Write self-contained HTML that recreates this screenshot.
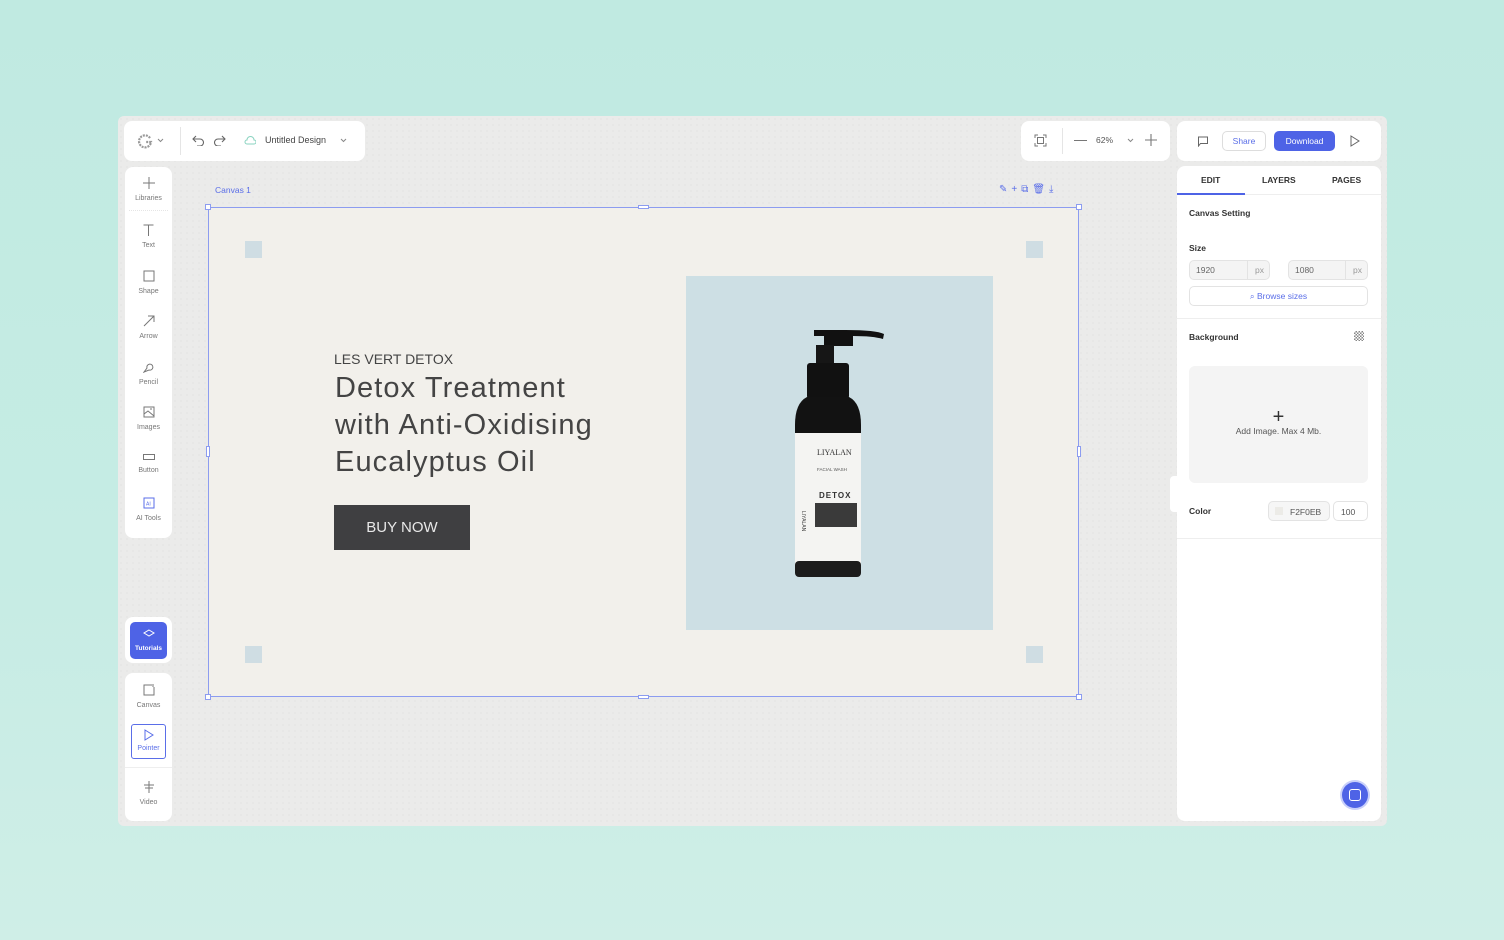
<!DOCTYPE html>
<html><head><meta charset="utf-8"><style>
*{box-sizing:border-box;margin:0;padding:0}
body{width:1504px;height:940px;overflow:hidden;background:linear-gradient(180deg,#c0eae1 0%,#c6ece4 60%,#cfeee7 100%);font-family:"Liberation Sans",sans-serif;position:relative;color:#333}
.abs{position:absolute}
.frame{left:118px;top:116px;width:1269px;height:710px;background:#ebebea;border-radius:6px;background-image:radial-gradient(#dcdcdc 0.6px,transparent 0.7px);background-size:6px 6px}
.card{background:#fff;border-radius:8px;position:absolute}
.tool{position:absolute;left:0;width:47px;text-align:center;font-size:7px;color:#777}
.tool svg{display:block;margin:0 auto 6px}
.btab{font-size:8.5px;font-weight:bold;color:#333;position:absolute;top:9px}
.lbl{font-size:8.5px;font-weight:bold;color:#333;position:absolute}
.inp{position:absolute;height:20px;border:1px solid #e3e3e3;border-radius:5px;background:#f4f4f4;font-size:8.5px;color:#666}
</style></head><body>
<div class="abs frame"></div>
<div class="card" style="left:124px;top:121px;width:241px;height:40px">
 <svg class="abs" style="left:13px;top:12px" width="16" height="16" viewBox="0 0 16 16"><path d="M13 5A6 6 0 1 0 14 9H9" fill="none" stroke="#999" stroke-width="2.2" stroke-dasharray="2 1"/></svg>
 <svg class="abs" style="left:33px;top:17px" width="7" height="5" viewBox="0 0 7 5"><path d="M1 1l2.5 2.5L6 1" fill="none" stroke="#888"/></svg>
 <div class="abs" style="left:56px;top:6px;width:1px;height:28px;background:#e5e5e5"></div>
 <svg class="abs" style="left:68px;top:13px" width="13" height="12" viewBox="0 0 13 12"><path d="M4 2L1 5l3 3M1 5h7a3.5 3.5 0 0 1 0 7H5" fill="none" stroke="#666" stroke-width="1.1"/></svg>
 <svg class="abs" style="left:89px;top:13px" width="13" height="12" viewBox="0 0 13 12"><path d="M9 2l3 3-3 3M12 5H5a3.5 3.5 0 0 0 0 7h3" fill="none" stroke="#666" stroke-width="1.1"/></svg>
 <svg class="abs" style="left:120px;top:15px" width="12" height="9" viewBox="0 0 12 9"><path d="M3 8h7a2 2 0 0 0 0-4 3.5 3.5 0 0 0-7 0 2 2 0 0 0 0 4z" fill="none" stroke="#8ad3c0"/></svg>
 <div class="abs" style="left:141px;top:14px;font-size:9px;color:#444">Untitled Design</div>
 <svg class="abs" style="left:216px;top:17px" width="7" height="5" viewBox="0 0 7 5"><path d="M1 1l2.5 2.5L6 1" fill="none" stroke="#888"/></svg>
</div>
<div class="card" style="left:1021px;top:121px;width:149px;height:40px">
 <svg class="abs" style="left:13px;top:13px" width="13" height="13" viewBox="0 0 13 13"><path d="M1 4V1h3M9 1h3v3M12 9v3H9M4 12H1V9" fill="none" stroke="#777"/><rect x="3.5" y="3.5" width="6" height="6" fill="none" stroke="#777"/></svg>
 <div class="abs" style="left:41px;top:7px;width:1px;height:26px;background:#e5e5e5"></div>
 <div class="abs" style="left:53px;top:19px;width:13px;height:1.2px;background:#777"></div>
 <div class="abs" style="left:75px;top:14px;font-size:8.5px;color:#555">62%</div>
 <svg class="abs" style="left:106px;top:17px" width="7" height="5" viewBox="0 0 7 5"><path d="M1 1l2.5 2.5L6 1" fill="none" stroke="#888"/></svg>
 <svg class="abs" style="left:124px;top:13px" width="12" height="12" viewBox="0 0 12 12"><path d="M6 0v12M0 6h12" stroke="#777" stroke-width="1.1"/></svg>
</div>
<div class="card" style="left:1177px;top:121px;width:204px;height:40px">
 <svg class="abs" style="left:20px;top:15px" width="12" height="11" viewBox="0 0 12 11"><path d="M1.5 1h9v6.5h-7L1.5 10z" fill="none" stroke="#666"/></svg>
 <div class="abs" style="left:45px;top:10px;width:44px;height:20px;border:1px solid #ddd;border-radius:5px;font-size:8.5px;color:#5a6ee8;text-align:center;line-height:18px">Share</div>
 <div class="abs" style="left:97px;top:10px;width:61px;height:20px;background:#4e63e6;border-radius:5px;font-size:8.5px;color:#fff;text-align:center;line-height:20px">Download</div>
 <svg class="abs" style="left:173px;top:14px" width="10" height="12" viewBox="0 0 10 12"><path d="M1 1l8 5-8 5z" fill="none" stroke="#666"/></svg>
</div>
<div class="card" style="left:125px;top:167px;width:47px;height:371px">
 <div class="tool" style="top:10px"><svg width="12" height="12" viewBox="0 0 12 12"><path d="M6 0v12M0 6h12" stroke="#777"/></svg>Libraries</div>
 <div style="position:absolute;left:4px;right:4px;top:43px;border-top:1px dotted #e5e5e5"></div>
 <div class="tool" style="top:57px"><svg width="11" height="12" viewBox="0 0 11 12"><path d="M0.5 1h10M5.5 1v11" stroke="#777"/></svg>Text</div>
 <div class="tool" style="top:103px"><svg width="12" height="12" viewBox="0 0 12 12"><rect x="1" y="1" width="10" height="10" fill="none" stroke="#777"/></svg>Shape</div>
 <div class="tool" style="top:148px"><svg width="12" height="12" viewBox="0 0 12 12"><path d="M1 11L11 1M5 1h6v6" fill="none" stroke="#777"/></svg>Arrow</div>
 <div class="tool" style="top:194px"><svg width="12" height="12" viewBox="0 0 12 12"><path d="M1 11l3-4a3 3 0 1 1 2 2z" fill="none" stroke="#777"/></svg>Pencil</div>
 <div class="tool" style="top:239px"><svg width="12" height="12" viewBox="0 0 12 12"><rect x="1" y="1" width="10" height="10" fill="none" stroke="#777"/><path d="M1 8l4-3 6 5M7 3h2" fill="none" stroke="#777"/></svg>Images</div>
 <div class="tool" style="top:286px"><svg width="12" height="8" viewBox="0 0 12 8"><rect x="0.5" y="1.5" width="11" height="5" fill="none" stroke="#777"/></svg>Button</div>
 <div class="tool" style="top:330px"><svg width="12" height="12" viewBox="0 0 12 12"><rect x="1" y="1" width="10" height="10" fill="none" stroke="#5a6ee8"/><text x="3" y="8.5" font-size="5" fill="#5a6ee8">AI</text></svg>AI Tools</div>
</div>
<div class="card" style="left:125px;top:617px;width:47px;height:46px">
 <div class="abs" style="left:5px;top:5px;width:37px;height:37px;background:#4e63e6;border-radius:5px;color:#fff;font-size:6.5px;font-weight:bold;text-align:center;padding-top:7px"><svg width="12" height="10" viewBox="0 0 12 10" style="display:block;margin:0 auto 6px"><path d="M6 1l5 3-5 3-5-3z" fill="none" stroke="#fff"/></svg>Tutorials</div>
</div>
<div class="card" style="left:125px;top:673px;width:47px;height:148px">
 <div class="tool" style="top:11px"><svg width="12" height="12" viewBox="0 0 12 12"><path d="M9 1H1v10h10V3M10 0v3" fill="none" stroke="#777"/></svg>Canvas</div>
 <div class="abs" style="left:6px;top:51px;width:35px;height:35px;border:1px solid #5a6ee8;border-radius:3px;color:#5a6ee8;font-size:7px;text-align:center;padding-top:4px"><svg width="11" height="12" viewBox="0 0 11 12" style="display:block;margin:0 auto 4px"><path d="M2 1l8 5-8 5z" fill="none" stroke="#5a6ee8"/></svg>Pointer</div>
 <div style="position:absolute;left:0;right:0;top:94px;border-top:1px solid #eee"></div>
 <div class="tool" style="top:108px"><svg width="12" height="12" viewBox="0 0 12 12"><path d="M6 0v12M1 4h10M2 7h8" stroke="#777"/></svg>Video</div>
</div>
<div class="abs" style="left:215px;top:185px;font-size:8.5px;color:#5a6ee8">Canvas 1</div>
<div class="abs" style="left:999px;top:184px;font-size:10px;color:#5a6ee8;letter-spacing:4px">✎+⧉🗑⤓</div>
<div class="abs" style="left:208px;top:207px;width:871px;height:490px;background:#f2f0eb;border:1px solid #8c9cf0"></div>
<div class="abs" style="left:205px;top:204px;width:6px;height:6px;background:#fff;border:1px solid #8c9cf0"></div>
<div class="abs" style="left:1076px;top:204px;width:6px;height:6px;background:#fff;border:1px solid #8c9cf0"></div>
<div class="abs" style="left:205px;top:694px;width:6px;height:6px;background:#fff;border:1px solid #8c9cf0"></div>
<div class="abs" style="left:1076px;top:694px;width:6px;height:6px;background:#fff;border:1px solid #8c9cf0"></div>
<div class="abs" style="left:638px;top:205px;width:11px;height:4px;background:#fff;border:1px solid #8c9cf0"></div>
<div class="abs" style="left:638px;top:695px;width:11px;height:4px;background:#fff;border:1px solid #8c9cf0"></div>
<div class="abs" style="left:206px;top:446px;width:4px;height:11px;background:#fff;border:1px solid #8c9cf0"></div>
<div class="abs" style="left:1077px;top:446px;width:4px;height:11px;background:#fff;border:1px solid #8c9cf0"></div>
<div class="abs" style="left:245px;top:241px;width:17px;height:17px;background:#cfdde3"></div>
<div class="abs" style="left:1026px;top:241px;width:17px;height:17px;background:#cfdde3"></div>
<div class="abs" style="left:245px;top:646px;width:17px;height:17px;background:#cfdde3"></div>
<div class="abs" style="left:1026px;top:646px;width:17px;height:17px;background:#cfdde3"></div>
<div class="abs" style="left:334px;top:351px;font-size:14px;color:#444">LES VERT DETOX</div>
<div class="abs" style="left:335px;top:370px;font-size:29px;line-height:37px;color:#444;letter-spacing:1.1px">Detox Treatment<br>with Anti-Oxidising<br>Eucalyptus Oil</div>
<div class="abs" style="left:334px;top:505px;width:136px;height:45px;background:#3f3f41;color:#e8e8e8;font-size:15px;text-align:center;line-height:45px">BUY NOW</div>
<div class="abs" style="left:686px;top:276px;width:307px;height:354px;background:#cddfe4"></div>
<svg class="abs" style="left:790px;top:325px" width="96" height="255" viewBox="0 0 96 255">
 <path d="M24 5h32q30 0 38 4l-1 5q-10-3-30-3v10H34V11h-10z" fill="#111"/>
 <rect x="26" y="20" width="18" height="18" fill="#161616"/>
 <rect x="17" y="38" width="42" height="36" rx="3" fill="#111"/>
 <path d="M17 72q-12 6-12 28v140q0 12 10 12h46q10 0 10-12V100q0-22-12-28z" fill="#121212"/>
 <rect x="5" y="108" width="66" height="135" fill="#f4f4f2"/>
 <text x="27" y="130" font-size="8" font-family="Liberation Serif" fill="#333">LIYALAN</text>
 <text x="27" y="146" font-size="4.5" fill="#555">FACIAL WASH</text>
 <text x="29" y="173" font-size="8" font-weight="bold" fill="#333" letter-spacing="1">DETOX</text>
 <rect x="25" y="178" width="42" height="24" fill="#3a3a3a"/>
 <text x="8" y="190" font-size="5" fill="#444" transform="rotate(90 12 190)">LIYALAN</text>
 <rect x="5" y="236" width="66" height="16" rx="4" fill="#1c1c1c"/>
</svg>
<div class="card" style="left:1177px;top:166px;width:204px;height:655px">
 <div class="btab" style="left:24px">EDIT</div>
 <div class="btab" style="left:85px">LAYERS</div>
 <div class="btab" style="left:155px">PAGES</div>
 <div class="abs" style="left:0;top:27px;width:68px;height:2px;background:#4e63e6"></div>
 <div class="abs" style="left:68px;top:28px;width:136px;height:1px;background:#eee"></div>
 <div class="lbl" style="left:12px;top:42px">Canvas Setting</div>
 <div class="lbl" style="left:12px;top:77px">Size</div>
 <div class="inp" style="left:12px;top:94px;width:81px"><span class="abs" style="left:6px;top:4px">1920</span><span class="abs" style="left:57px;top:0;height:18px;border-left:1px solid #e3e3e3;padding:4px 0 0 7px;color:#999">px</span></div>
 <div class="inp" style="left:111px;top:94px;width:80px"><span class="abs" style="left:6px;top:4px">1080</span><span class="abs" style="left:56px;top:0;height:18px;border-left:1px solid #e3e3e3;padding:4px 0 0 7px;color:#999">px</span></div>
 <div class="abs" style="left:12px;top:120px;width:179px;height:20px;border:1px solid #e3e3e3;border-radius:5px;font-size:8.5px;color:#5a6ee8;text-align:center;line-height:18px">⌕ Browse sizes</div>
 <div class="abs" style="left:0;top:152px;width:204px;height:1px;background:#eee"></div>
 <div class="lbl" style="left:12px;top:166px">Background</div>
 <div class="abs" style="left:177px;top:165px;width:10px;height:10px;background-image:repeating-conic-gradient(#888 0 25%,#fff 0 50%);background-size:3px 3px"></div>
 <div class="abs" style="left:12px;top:200px;width:179px;height:117px;background:#f4f4f4;border-radius:6px;text-align:center;font-size:8.5px;color:#555;padding-top:42px"><div style="font-size:20px;line-height:18px;color:#333;font-weight:300">+</div>Add Image. Max 4 Mb.</div>
 <div class="lbl" style="left:12px;top:340px">Color</div>
 <div class="abs" style="left:91px;top:335px;width:62px;height:20px;border:1px solid #e3e3e3;border-radius:5px;background:#f6f6f6;font-size:8.5px;color:#555"><span class="abs" style="left:6px;top:5px;width:8px;height:8px;background:#ecebe7"></span><span class="abs" style="left:21px;top:5px">F2F0EB</span></div>
 <div class="abs" style="left:156px;top:335px;width:35px;height:20px;border:1px solid #e3e3e3;border-radius:5px;font-size:8.5px;color:#555;padding:5px 0 0 7px">100</div>
 <div class="abs" style="left:0;top:372px;width:204px;height:1px;background:#eee"></div>
 <div class="abs" style="left:165px;top:616px;width:26px;height:26px;border-radius:50%;background:#4e63e6;box-shadow:0 0 0 2px #c9d0fa"><div class="abs" style="left:7px;top:7px;width:12px;height:12px;border:1.5px solid #fff;border-radius:3px"></div></div>
</div>
<div class="abs" style="left:1170px;top:476px;width:8px;height:36px;background:#fff;border-radius:4px 0 0 4px"></div>
</body></html>
